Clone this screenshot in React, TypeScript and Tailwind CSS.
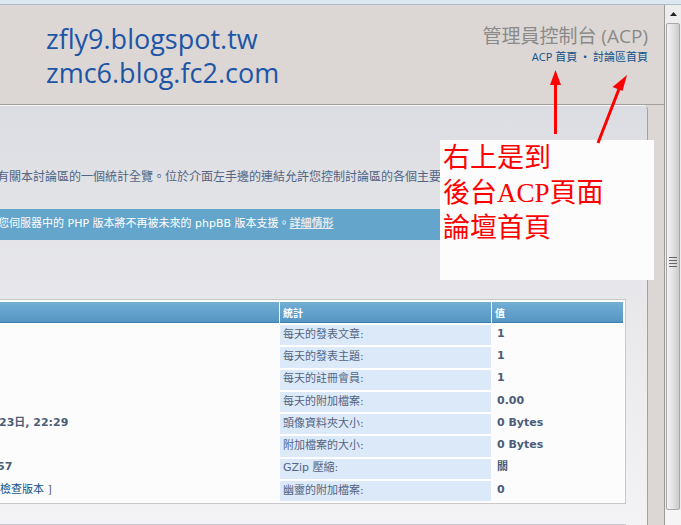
import React from "react";

const sans = { fontFamily: '"DejaVu Sans", "Noto Sans CJK TC", sans-serif' };

const stats = [
  { label: "每天的發表文章:", value: "1" },
  { label: "每天的發表主題:", value: "1" },
  { label: "每天的註冊會員:", value: "1" },
  { label: "每天的附加檔案:", value: "0.00" },
  { label: "頭像資料夾大小:", value: "0 Bytes" },
  { label: "附加檔案的大小:", value: "0 Bytes" },
  { label: "GZip 壓縮:", value: "關" },
  { label: "幽靈的附加檔案:", value: "0" },
];

// cut-off text of the left table, by row index
const leftCol: Record<number, React.ReactNode> = {
  4: <span className="font-bold text-[#4c5d77] -ml-[1px]">23日, 22:29</span>,
  6: <span className="font-bold text-[#4c5d77] -ml-[3px]">57</span>,
  7: <span className="text-[#105289]">檢查版本 <span className="text-[#536482]">]</span></span>,
};

const Scrollbar: React.FC = () => (
  <div className="w-[17px] flex flex-col bg-[#ededed] border-l border-[#9a9a9a]">
    <div className="h-[18px] flex items-center justify-center">
      <svg width="7" height="4" viewBox="0 0 7 4"><path d="M3.5 0L7 4H0z" fill="#222" /></svg>
    </div>
    <div className="mx-[1px] h-[487px] rounded-[2px] border border-[#a8a8a8] bg-gradient-to-r from-[#f4f4f4] via-[#e2e2e2] to-[#cbcbcb] flex items-center justify-center">
      <div className="flex flex-col gap-[2px] w-[8px] -mt-[10px]">
        <div className="h-[1px] bg-[#666]" />
        <div className="h-[1px] bg-[#666]" />
        <div className="h-[1px] bg-[#666]" />
        <div className="h-[1px] bg-[#666]" />
      </div>
    </div>
    <div className="flex-1 bg-[#f5f5f5]" />
  </div>
);

const App: React.FC = () => {
  return (
    <div className="relative w-[681px] h-[525px] overflow-hidden bg-[#dcd7d4]" style={sans}>
      {/* window strip */}
      <div className="h-[5px] bg-[#dce7f2] border-b border-[#aebccb]" />

      <div className="flex h-[520px]">
        <div className="w-[664px] flex flex-col">
          {/* Header */}
          <div className="h-[100px] flex justify-between border-b border-[#a29e9c]">
            <div className="pl-[46px] pt-[17px] text-[27px] leading-[34px] text-[#1d55a6]" style={{ fontFamily: '"Open Sans", sans-serif' }}>
              <p>zfly9.blogspot.tw</p>
              <p>zmc6.blog.fc2.com</p>
            </div>
            <div className="pr-[16px] pt-[19px] flex flex-col items-end">
              <h1 className="text-[19px] leading-[24px] text-[#8a8a8a]" style={{ fontFamily: '"Open Sans", "Noto Sans CJK TC", sans-serif' }}>管理員控制台 (ACP)</h1>
              <p className="mt-[2px] text-[11px] leading-[14px] text-[#105289]" style={{ fontFamily: '"Open Sans", "Noto Sans CJK TC", sans-serif' }}>
                ACP 首頁 <span className="mx-[3px]">•</span> 討論區首頁
              </p>
            </div>
          </div>

          {/* Main panel */}
          <div className="flex-1 mr-[16px] rounded-tr-[5px] border-t border-r border-t-[#f4f4f6] border-r-[#a2a2a4] bg-gradient-to-b from-[#dcdde2] via-[#e9e9ec] to-[#f3f2f5] overflow-hidden">
            <p className="mt-[63px] text-[12px] leading-[16px] text-[#536482] whitespace-nowrap -ml-[3px]">
              有關本討論區的一個統計全覽。位於介面左手邊的連結允許您控制討論區的各個主要方面。
            </p>

            <div className="mt-[24px] h-[31px] bg-[#64a5cc] flex items-center text-[11px] text-white whitespace-nowrap">
              <span className="-ml-[2px]">
                您伺服器中的 PHP 版本將不再被未來的 phpBB 版本支援。
                <span className="font-bold underline text-[#e6e8ea]">詳細情形</span>
              </span>
            </div>
            <div className="mt-[12px] border-t-2 border-dotted border-[#e3e6ea]" />

            {/* Statistics table */}
            <div className="mt-[45px] w-[626px] border border-l-0 border-[#c8c8cc] py-[2px] pr-[2px] bg-[#fcfcfc] text-[11px]">
              <div className="grid grid-cols-[279px_211px_131px] gap-x-[1px]">
                <div className="h-[21px] bg-gradient-to-b from-[#72aed4] to-[#5496c3] border-b border-[#3d7eae]" />
                <div className="h-[21px] bg-gradient-to-b from-[#72aed4] to-[#5496c3] border-b border-[#3d7eae] flex items-center pl-[3px] text-[10px] font-bold text-white" style={{ fontFamily: '"Noto Sans CJK TC", sans-serif' }}>統計</div>
                <div className="h-[21px] bg-gradient-to-b from-[#72aed4] to-[#5496c3] border-b border-[#3d7eae] flex items-center pl-[3px] text-[10px] font-bold text-white" style={{ fontFamily: '"Noto Sans CJK TC", sans-serif' }}>值</div>
                {stats.map((s, i) => (
                  <React.Fragment key={s.label}>
                    <div className="h-[22.25px] flex items-center whitespace-nowrap">{leftCol[i]}</div>
                    <div className="h-[22.25px] bg-[#dce9f9] border-t-2 border-white flex items-center pl-[3px] text-[#536482]">{s.label}</div>
                    <div className="h-[22.25px] flex items-center pl-[5px] font-bold text-[#4c5d77]">{s.value}</div>
                  </React.Fragment>
                ))}
              </div>
            </div>
            <div className="mt-[20px] w-[626px] border-t border-[#c8c8cc]" />
          </div>
        </div>
        <Scrollbar />
      </div>

      {/* Annotation note */}
      <div
        className="absolute left-[440px] top-[140px] w-[214px] h-[140px] bg-[#fcfcfc] pl-[3px] pt-[1px] text-[27px] leading-[35px] text-[#ff0000]"
        style={{ fontFamily: '"Liberation Serif", "Noto Sans CJK TC", serif' }}
      >
        <p>右上是到</p>
        <p>後台ACP頁面</p>
        <p>論壇首頁</p>
      </div>

      {/* Annotation arrows */}
      <svg className="absolute left-0 top-0 pointer-events-none" width="681" height="525" viewBox="0 0 681 525">
        <line x1="555.5" y1="134" x2="555.5" y2="82" stroke="#ff0000" strokeWidth="3" />
        <path d="M555.5 70L561 85H550z" fill="#ff0000" />
        <line x1="598" y1="143" x2="619" y2="89" stroke="#ff0000" strokeWidth="3" />
        <path d="M627 75L622.5 91L612.5 87z" fill="#ff0000" />
      </svg>
    </div>
  );
};

export default App;
